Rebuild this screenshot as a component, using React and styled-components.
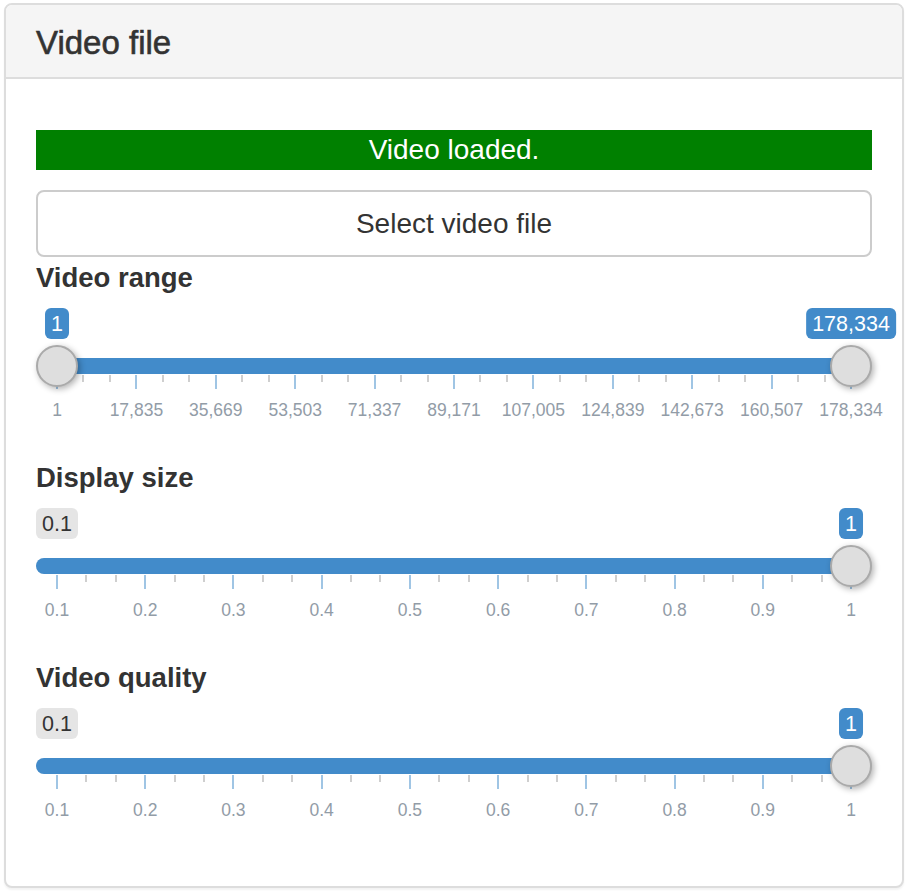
import React from 'react';
import styled, { createGlobalStyle } from 'styled-components';

const Global = createGlobalStyle`
  html, body { margin: 0; padding: 0; background: #fff; }
  body {
    font-family: "Liberation Sans", Arial, Helvetica, sans-serif;
    color: #333;
  }
  * { box-sizing: border-box; }
`;

const Panel = styled.section`
  margin: 3px 4px 7px;
  border: 2px solid #ddd;
  border-radius: 8px;
  background: #fff;
  box-shadow: 0 2px 2px rgba(0, 0, 0, 0.05);
`;

const Heading = styled.header`
  background: #f5f5f5;
  border-bottom: 2px solid #ddd;
  border-radius: 6px 6px 0 0;
  padding: 21px 30px 17px;
`;

const Title = styled.h3`
  margin: 0;
  font-size: 33px;
  line-height: 34px;
  font-weight: 400;
  color: #333;
  -webkit-text-stroke: 0.6px #333;
`;

const Body = styled.div`
  padding: 51px 30px 23px;
  display: flex;
  flex-direction: column;
`;

const Status = styled.div`
  height: 40px;
  background: #008000;
  color: #fff;
  font-size: 28px;
  line-height: 40px;
  text-align: center;
  margin-bottom: 20px;
`;

const FileButton = styled.button`
  display: block;
  width: 100%;
  height: 67px;
  margin: 0 0 6px;
  padding: 0;
  border: 2px solid #ccc;
  border-radius: 8px;
  background: #fff;
  color: #333;
  font-family: inherit;
  font-size: 28px;
  cursor: pointer;
`;

const Group = styled.div`
  padding-bottom: 35px;
`;

const Label = styled.label`
  display: block;
  font-weight: 700;
  font-size: 27.5px;
  line-height: 30px;
  margin-bottom: 15px;
  color: #333;
`;

const Track = styled.div`
  position: relative;
  height: 120px;
`;

const Line = styled.div`
  position: absolute;
  top: 50px;
  left: 0;
  right: 0;
  height: 16px;
  border-radius: 8px;
  background: #ededed;
`;

const Bar = styled.div`
  position: absolute;
  top: 50px;
  height: 16px;
  background: #428bca;
  border-radius: ${p => (p.$edge ? '8px 0 0 8px' : '0')};
`;

const Handle = styled.div`
  position: absolute;
  top: 37px;
  width: 42px;
  height: 42px;
  transform: translateX(-50%);
  border-radius: 50%;
  border: 2px solid #aaa;
  background: #dedede;
  box-shadow: 2px 2px 6px rgba(0, 0, 0, 0.3);
  z-index: 2;
`;

const Bubble = styled.div`
  position: absolute;
  top: 0;
  height: 31px;
  padding: 1px 6px 0;
  border-radius: 6px;
  font-size: 21.5px;
  line-height: 30px;
  white-space: nowrap;
  background: ${p => (p.$muted ? 'rgba(0,0,0,0.1)' : '#428bca')};
  color: ${p => (p.$muted ? '#333' : '#fff')};
  transform: ${p => (p.$centered ? 'translateX(-50%)' : 'none')};
  z-index: 3;
`;

const Pol = styled.div`
  position: absolute;
  top: 67px;
  width: 2px;
  height: ${p => (p.$big ? '14px' : '7px')};
  transform: translateX(-50%);
  background: ${p => (p.$big ? 'rgba(66,139,202,0.5)' : '#cfcfcf')};
`;

const GridText = styled.div`
  position: absolute;
  top: 92px;
  transform: translateX(-50%);
  font-size: 17.5px;
  line-height: 20px;
  white-space: nowrap;
  color: #929ca7;
`;

const at = t => `calc(21px + (100% - 42px) * ${t})`;

function Slider({ grid, values, labels, minLabel }) {
  const n = grid.length - 1;
  const pols = [];
  for (let i = 0; i <= n; i++) {
    if (i > 0) {
      pols.push({ t: (i - 2 / 3) / n, big: false });
      pols.push({ t: (i - 1 / 3) / n, big: false });
    }
    pols.push({ t: i / n, big: true });
  }
  const single = values.length === 1;
  const barStyle = single
    ? { left: 0, width: at(values[0]) }
    : { left: at(values[0]), width: `calc((100% - 42px) * ${values[1] - values[0]})` };

  return (
    <Track>
      <Line />
      <Bar $edge={single} style={barStyle} />
      {pols.map((p, i) => (
        <Pol key={i} $big={p.big} style={{ left: at(p.t) }} />
      ))}
      {grid.map((g, i) => (
        <GridText key={g + i} style={{ left: at(i / n) }}>
          {g}
        </GridText>
      ))}
      {minLabel && (
        <Bubble $muted style={{ left: 0 }}>
          {minLabel}
        </Bubble>
      )}
      {values.map((v, i) => (
        <React.Fragment key={i}>
          <Handle style={{ left: at(v) }} />
          <Bubble $centered style={{ left: at(v) }}>
            {labels[i]}
          </Bubble>
        </React.Fragment>
      ))}
    </Track>
  );
}

const rangeGrid = [
  '1', '17,835', '35,669', '53,503', '71,337', '89,171',
  '107,005', '124,839', '142,673', '160,507', '178,334',
];
const decGrid = ['0.1', '0.2', '0.3', '0.4', '0.5', '0.6', '0.7', '0.8', '0.9', '1'];

export default function App() {
  return (
    <>
      <Global />
      <Panel>
        <Heading>
          <Title>Video file</Title>
        </Heading>
        <Body>
          <Status>Video loaded.</Status>
          <FileButton type="button">Select video file</FileButton>
          <Group>
            <Label>Video range</Label>
            <Slider grid={rangeGrid} values={[0, 1]} labels={['1', '178,334']} />
          </Group>
          <Group>
            <Label>Display size</Label>
            <Slider grid={decGrid} values={[1]} labels={['1']} minLabel="0.1" />
          </Group>
          <Group>
            <Label>Video quality</Label>
            <Slider grid={decGrid} values={[1]} labels={['1']} minLabel="0.1" />
          </Group>
        </Body>
      </Panel>
    </>
  );
}
